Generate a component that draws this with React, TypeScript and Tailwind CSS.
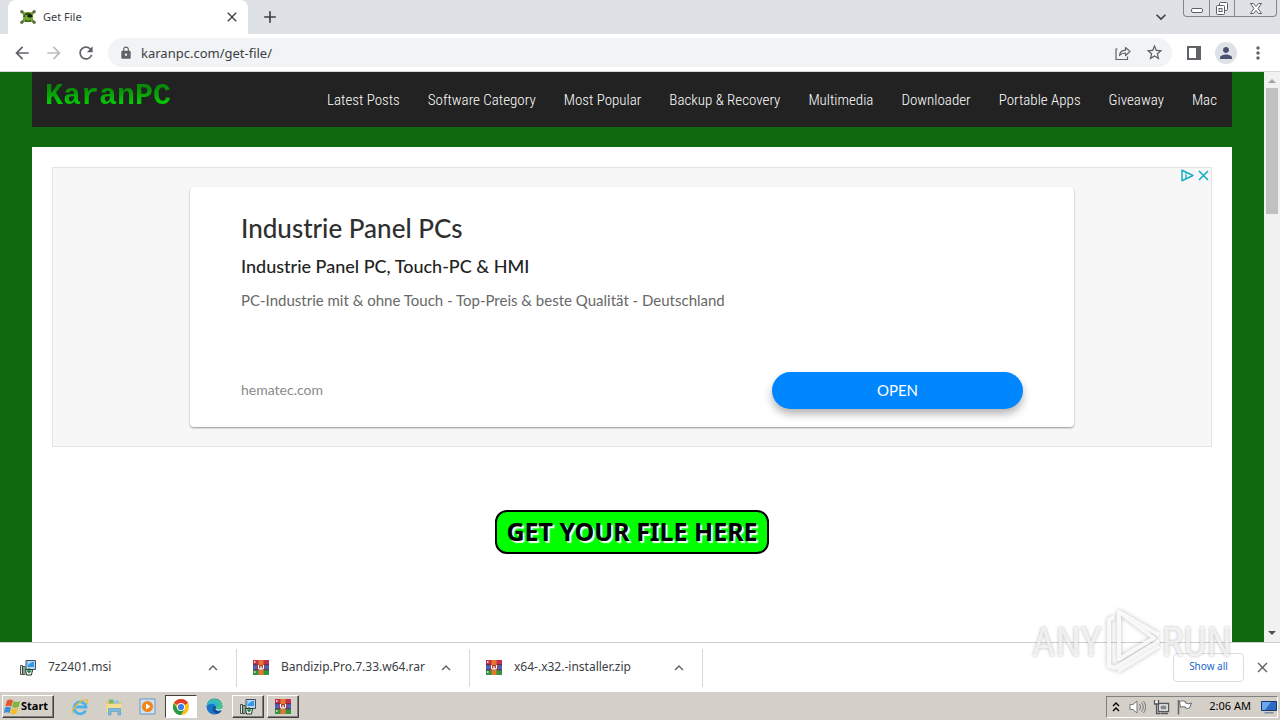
import React from "react";
import {
  MdAdd,
  MdArrowBack,
  MdArrowForward,
  MdClose,
  MdExpandLess,
  MdExpandMore,
  MdLock,
  MdMoreVert,
  MdPerson,
  MdRefresh,
  MdStarBorder,
} from "react-icons/md";

const uiFont = "font-['Noto_Sans',sans-serif]";

const navLinks = [
  "Latest Posts",
  "Software Category",
  "Most Popular",
  "Backup & Recovery",
  "Multimedia",
  "Downloader",
  "Portable Apps",
  "Giveaway",
  "Mac",
];

function Favicon() {
  return (
    <svg viewBox="0 0 16 16" className="size-4" aria-hidden="true">
      <path d="M2 3l12 10M14 3L2 13" stroke="#6f7d4c" strokeWidth="2.6" strokeLinecap="round" />
      <circle cx="1.8" cy="2.5" r="1.6" fill="#5f6d45" />
      <circle cx="14.2" cy="2.5" r="1.6" fill="#5f6d45" />
      <circle cx="1.8" cy="13.3" r="1.6" fill="#5f6d45" />
      <circle cx="14.2" cy="13.3" r="1.6" fill="#5f6d45" />
      <rect x="3" y="3" width="10" height="10" rx="3" fill="#74a832" />
      <path d="M3.500 6.500Q8 1 12.500 6.500V8H3.500z" fill="#2a4a18" />
      <circle cx="6" cy="7" r="1.100" fill="#8cc63f" />
      <path d="M8.500 5.500h3v3h-3z" fill="#0c1408" />
      <path d="M5 10.500q3 2 6 0v2.500H5z" fill="#3f6a1d" />
    </svg>
  );
}

function RarIcon() {
  return (
    <svg viewBox="0 0 16 15" className="h-[15px] w-4" aria-hidden="true">
      <path d="M0 0h16v5H0z" fill="#c0304e" />
      <path d="M0 5h16v5H0z" fill="#4f62b8" />
      <path d="M0 10h16v5H0z" fill="#2f9444" />
      <path d="M0 4.800h16M0 9.800h16" stroke="#4a2740" strokeWidth=".8" />
      <path d="M5.500 0h5v15h-5z" fill="#e8762a" />
      <path d="M1 1h1.500v2H1zM1 11h1.500v2H1z" fill="#f0c8b0" />
      <path d="M4 5h8v5H4z" fill="#9a3434" />
      <path d="M5.500 5v2.500q0 1.700 1.300 1.700T8 7.500V6v1.500q0 1.700 1.200 1.700t1.300-1.700V5" fill="none" stroke="#fff" strokeWidth="1.200" />
    </svg>
  );
}

function MsiIcon() {
  return (
    <svg viewBox="0 0 16 16" className="size-4" aria-hidden="true">
      <path d="M6 .5h9.500v9H6z" fill="#c8d4e4" stroke="#36506e" />
      <path d="M7.500 2h6.500v5H7.500z" fill="#2f9be8" />
      <path d="M8 2h4l-4 3z" fill="#9bdcff" />
      <path d="M8 10h5v2H8z" fill="#8898ac" />
      <path d="M.5 5.500h2v9h-2zM3 6.500h2v8H3z" fill="#dfe6da" stroke="#20302c" strokeWidth=".8" />
      <path d="M5.500 9.500h7l-1 5.500h-5z" fill="#f5f5e8" stroke="#25342e" />
      <path d="M9 8v4M7.300 10.500L9 12.500l1.800-2" fill="none" stroke="#17804a" strokeWidth="1.200" />
    </svg>
  );
}

function ShareIcon() {
  return (
    <svg viewBox="0 0 16 16" className="size-4" fill="none" stroke="#5f6368" aria-hidden="true">
      <path d="M2.500 4H1v10.500h11.500v-3" strokeWidth="1.200" />
      <path d="M4.500 10.500q.5-5 6-5.300V2.500l4.500 4-4.500 4V8q-4 0-6 2.500z" strokeWidth="1.200" strokeLinejoin="round" />
    </svg>
  );
}

function TabStrip() {
  return (
    <div className="flex h-[34px] shrink-0 items-stretch bg-[#dee1e6]">
      <div className="ml-2 flex w-[240px] items-center rounded-t-lg bg-white pl-3 pr-2">
        <Favicon />
        <span className="ml-[7px] flex-1 text-[11px] text-[#3c4043]">Get File</span>
        <button aria-label="Close tab" className="text-[#3c4043]">
          <MdClose className="size-4" />
        </button>
      </div>
      <button aria-label="New tab" className="ml-3 text-[#3c4043]">
        <MdAdd className="size-5" />
      </button>
      <button aria-label="Search tabs" className="ml-auto mr-3 text-[#3c4043]">
        <MdExpandMore className="size-5" />
      </button>
      <div className="mr-[3px] flex h-[17px] overflow-hidden rounded-b-[4px] border border-t-0 border-[#82868d] text-[#5c6066]">
        <button aria-label="Minimize" className="flex w-[25px] items-center justify-center">
          <svg viewBox="0 0 12 12" className="size-3" aria-hidden="true">
            <rect x=".5" y="6.500" width="11" height="4" rx="1.500" fill="#fff" stroke="currentColor" />
          </svg>
        </button>
        <button aria-label="Restore" className="flex w-[26px] items-center justify-center border-x border-[#82868d]">
          <svg viewBox="0 0 14 13" className="h-[13px] w-3.5" aria-hidden="true">
            <rect x="4.500" y=".5" width="8" height="8" rx="1" fill="#fff" stroke="currentColor" />
            <rect x="1.500" y="3.500" width="8" height="9" rx="1" fill="#fff" stroke="currentColor" />
            <rect x="4" y="6.500" width="3" height="3" fill="none" stroke="currentColor" />
          </svg>
        </button>
        <button aria-label="Close window" className="flex w-[41px] items-center justify-center">
          <svg viewBox="0 0 12 11" className="h-[11px] w-3" aria-hidden="true">
            <path d="M.5 .5h3L6 3.500 8.500 .5h3L8 5.500l3.500 5h-3L6 7.500l-2.500 3h-3L4 5.500z" fill="#fff" stroke="currentColor" />
          </svg>
        </button>
      </div>
    </div>
  );
}

function Toolbar() {
  return (
    <div className="flex h-[38px] shrink-0 items-center border-b border-[#d5d7da] bg-white px-3 text-[#5f6368]">
      <button aria-label="Back">
        <MdArrowBack className="size-5" />
      </button>
      <button aria-label="Forward" className="ml-3 text-[#babcbe]">
        <MdArrowForward className="size-5" />
      </button>
      <button aria-label="Reload" className="ml-3">
        <MdRefresh className="size-5" />
      </button>
      <div className="ml-3 flex h-[29px] flex-1 items-center rounded-full bg-[#f1f3f4] pl-[11px] pr-2">
        <MdLock className="size-3.5" />
        <input
          type="text"
          aria-label="Address"
          defaultValue="karanpc.com/get-file/"
          className="h-full min-w-0 flex-1 bg-transparent pl-2 text-[13px] leading-5 text-[#3c4043] outline-none"
        />
        <button aria-label="Share">
          <ShareIcon />
        </button>
        <button aria-label="Bookmark" className="ml-3.5">
          <MdStarBorder className="size-[19px]" />
        </button>
      </div>
      <button aria-label="Side panel" className="ml-[15px]">
        <svg viewBox="0 0 14 14" className="size-3.5" aria-hidden="true">
          <path d="M1 1h12v12H1z" fill="none" stroke="currentColor" strokeWidth="2" />
          <path d="M9 0h5v14H9z" fill="currentColor" />
        </svg>
      </button>
      <button aria-label="Profile" className="ml-3.5 flex size-[22px] items-center justify-center rounded-full bg-[#dee1e6]">
        <MdPerson className="size-[18px] text-[#4a5170]" />
      </button>
      <button aria-label="Menu" className="ml-[11px]">
        <MdMoreVert className="size-5" />
      </button>
    </div>
  );
}

function SiteHeader() {
  return (
    <header className="flex h-[55px] items-start justify-between bg-[#222222] pl-[13px] pr-[15px]">
      <a
        href="#home"
        className="mt-2 bg-gradient-to-b from-[#088c08] from-25% to-[#04d404] to-80% bg-clip-text font-['Liberation_Mono',monospace] text-[30px] font-bold leading-8 text-transparent"
      >
        KaranPC
      </a>
      <nav className="flex gap-7 pt-[18px] font-['Roboto_Condensed',sans-serif] text-[15px] font-light leading-5 text-white">
        {navLinks.map((label) => (
          <a key={label} href="#nav" className="whitespace-nowrap">
            {label}
          </a>
        ))}
      </nav>
    </header>
  );
}

function Advert() {
  return (
    <section
      aria-label="Advertisement"
      className="relative h-[280px] border border-[#e4e4e4] bg-[#f7f7f7] px-[137px] pt-[19px] font-['Lato',sans-serif]"
    >
      <div className="absolute right-px top-px flex gap-[3px] text-[#1cabc4]">
        <button aria-label="Ad choices">
          <svg viewBox="0 0 13 13" className="size-[13px]" fill="none" stroke="currentColor" aria-hidden="true">
            <path d="M1 1.200v10.600L12 6.500z" strokeWidth="1.500" strokeLinejoin="round" />
            <path d="M5 5.500v4M5 3.800v1" strokeWidth="1.400" />
          </svg>
        </button>
        <button aria-label="Close ad">
          <svg viewBox="0 0 13 13" className="size-[13px]" fill="none" stroke="currentColor" aria-hidden="true">
            <path d="M2 2l9 9M11 2l-9 9" strokeWidth="1.600" />
          </svg>
        </button>
      </div>
      <div className="flex h-[240px] flex-col rounded bg-white px-[51px] pb-[18px] pt-[23px] shadow-[0_1px_2px_rgba(0,0,0,0.4)]">
        <h2 className="text-[26px] font-medium leading-9 text-[#2f2f2f]">Industrie Panel PCs</h2>
        <h3 className="mt-1 text-[18px] font-medium leading-8 text-[#222]">Industrie Panel PC, Touch-PC &amp; HMI</h3>
        <p className="mt-1 text-[15px] leading-7 text-[#686868]">
          PC-Industrie mit &amp; ohne Touch - Top-Preis &amp; beste Qualität - Deutschland
        </p>
        <div className="mt-auto flex items-center justify-between">
          <a href="#ad" className="pb-0.5 text-[14px] text-[#8a8a8a]">
            hematec.com
          </a>
          <button className="h-[37px] w-[251px] rounded-full bg-[#0086ff] text-[15px] text-white shadow-[0_5px_9px_rgba(0,0,0,0.3)]">
            OPEN
          </button>
        </div>
      </div>
    </section>
  );
}

function Scrollbar() {
  return (
    <div className="flex w-4 shrink-0 flex-col items-center bg-[#f1f1f1]" aria-hidden="true">
      <svg viewBox="0 0 16 16" className="size-4">
        <path d="M4 11l4-4 4 4z" fill="#a3a3a3" />
      </svg>
      <div className="h-[126px] w-3 bg-[#c1c1c1]" />
      <svg viewBox="0 0 16 16" className="mt-auto size-4">
        <path d="M4 5l4 4 4-4z" fill="#505050" />
      </svg>
    </div>
  );
}

const downloads = [
  { name: "7z2401.msi", Icon: MsiIcon },
  { name: "Bandizip.Pro.7.33.w64.rar", Icon: RarIcon },
  { name: "x64-.x32.-installer.zip", Icon: RarIcon },
];

function DownloadShelf() {
  return (
    <div className="flex h-[51px] shrink-0 items-center border-y border-[#cfcfcf] bg-white pl-1">
      {downloads.map(({ name, Icon }) => (
        <div key={name} className="flex h-[38px] w-[233px] items-center border-r border-[#d5d7da] pl-4 pr-3.5">
          <Icon />
          <span className="ml-3 flex-1 whitespace-nowrap pb-0.5 text-[12px] text-[#3c4043]">{name}</span>
          <button aria-label={`Options for ${name}`} className="text-[#5f6368]">
            <MdExpandLess className="size-[18px]" />
          </button>
        </div>
      ))}
      <button className="ml-auto h-[29px] w-[71px] rounded-[4px] border border-[#dadce0] pb-0.5 text-[10px] text-[#1a66cc]">
        Show all
      </button>
      <button aria-label="Close downloads" className="ml-2.5 mr-[9px] text-[#5f6368]">
        <MdClose className="size-[17px]" />
      </button>
    </div>
  );
}

const taskButton =
  "flex h-[23px] w-8 items-center justify-center border border-b-[#404040] border-l-white border-r-[#404040] border-t-white bg-[#d4d0c8] shadow-[inset_-1px_-1px_0_#808080]";

function Taskbar() {
  return (
    <div className="flex h-[27px] shrink-0 items-center bg-[#d4d0c8] pl-0.5 pr-0.5 text-black">
      <button className="flex h-[23px] w-[52px] items-center border border-b-[#404040] border-l-white border-r-[#404040] border-t-white pl-px text-[11px] font-bold shadow-[inset_-1px_-1px_0_#808080]">
        <svg viewBox="0 0 17 16" className="h-4 w-[17px] shrink-0" aria-hidden="true">
          <path d="M3 1.500q3-2 6 0L7.300 7.500q-3-1.500-6 0z" fill="#e4572b" />
          <path d="M9.700 2.200q3 1.500 6.500 0L14.500 8q-3 1.500-6.500 0z" fill="#7db63c" />
          <path d="M1 8.500q3-1.500 6 0L5.500 14q-3-1.500-5.500 0z" fill="#3c8fd6" />
          <path d="M7.700 9q3 1.500 6.500 0l-1.700 5.500q-3 1.500-6.500 0z" fill="#f3bd2e" />
        </svg>
        Start
      </button>
      <button aria-label="Internet Explorer" className="ml-[17px]">
        <svg viewBox="0 0 18 18" className="size-[18px]" fill="none" aria-hidden="true">
          <path d="M14.500 12.500a6 6 0 1 1 .5-3.500H5" stroke="#4bb3ea" strokeWidth="2.800" />
          <path d="M2 15.500C-1 12 10 1 16 2q1.500 1-.5 4" stroke="#e9b93a" strokeWidth="1.400" />
        </svg>
      </button>
      <button aria-label="Explorer" className="ml-4">
        <svg viewBox="0 0 18 18" className="size-[18px]" aria-hidden="true">
          <path d="M1.500 3h6l1 1.500h8V14h-15z" fill="#e6c566" />
          <path d="M4 1.500h4.500v4H4z" fill="#78b66a" />
          <path d="M9 2.500h5v3H9z" fill="#8fc4e4" />
          <path d="M1.500 6h15v8h-15z" fill="#f4dd92" />
          <path d="M3.500 17v-6.500h12V17H13v-3.500H6V17z" fill="#77bce0" stroke="#4d98c4" strokeWidth=".6" />
        </svg>
      </button>
      <button aria-label="Media Player" className="ml-4">
        <svg viewBox="0 0 17 17" className="size-[17px]" aria-hidden="true">
          <path d="M1 1h15v15H1z" fill="#cfe2f3" stroke="#6699c5" />
          <circle cx="8.500" cy="8.500" r="5.500" fill="#f08519" />
          <path d="M7 5.500v6l4.500-3z" fill="#fff" />
        </svg>
      </button>
      <button
        aria-label="Chrome"
        className="ml-[9px] flex h-[23px] w-8 items-center justify-center border border-b-white border-l-[#404040] border-r-white border-t-[#404040] bg-white"
      >
        <svg viewBox="0 0 16 16" className="size-4" aria-hidden="true">
          <circle cx="8" cy="8" r="8" fill="#fbc116" />
          <path d="M8 8L1.070 4A8 8 0 0 1 14.930 4z" fill="#e33b2e" />
          <path d="M1.070 4A8 8 0 0 0 8 16l3.500-6L8 8 4.500 10z" fill="#269a45" />
          <circle cx="8" cy="8" r="4" fill="#fff" />
          <circle cx="8" cy="8" r="3.100" fill="#3d7de8" />
        </svg>
      </button>
      <button aria-label="Edge" className="ml-[9px]">
        <svg viewBox="0 0 17 17" className="size-[17px]" aria-hidden="true">
          <circle cx="8.500" cy="8.500" r="8" fill="#1775c6" />
          <path d="M.6 8A8 8 0 0 1 16.500 8q0 3.500-4 3.500-3.500 0-2.500-2.500Q9.500 5.500 6 5.500 2.500 5.500.6 8z" fill="#42c68a" />
          <path d="M.6 8Q2 2.500 8 3q5 .5 5 4L10 9Q9.500 5.500 6 5.500 2.500 5.500.6 8z" fill="#2fb4d8" />
          <path d="M10 9q-1 5 5.500 4-1.500 2-4 2.800Q5.500 14 7 9.500q1-2 3-.5z" fill="#124d93" />
          <path d="M10 9q-1 2.500 2.500 2.500t4-2.500l-.5 3q-5.500 2-6.500-1z" fill="#d4e9ee" />
        </svg>
      </button>
      <button aria-label="Installer" className={`${taskButton} ml-[9px]`}>
        <MsiIcon />
      </button>
      <button aria-label="WinRAR" className={`${taskButton} ml-[3px]`}>
        <RarIcon />
      </button>
      <div className="ml-auto flex h-[22px] items-center border border-b-white border-l-[#808080] border-r-white border-t-[#808080] pl-1">
        <svg viewBox="0 0 10 12" className="h-3 w-2.5" fill="none" stroke="#000" strokeWidth="1.400" aria-hidden="true">
          <path d="M2 5l3-3 3 3M2 10l3-3 3 3" />
        </svg>
        <svg viewBox="0 0 17 16" className="ml-2 h-4 w-[17px]" fill="none" stroke="#77777a" aria-hidden="true">
          <path d="M1 5.500h3L8 2v12L4 10.500H1z" fill="#fff" />
          <path d="M10.500 5q2 3 0 6M12.500 3.500q3.500 4.500 0 9M14.500 2q4.500 6 0 12" />
        </svg>
        <svg viewBox="0 0 17 16" className="ml-[7px] h-4 w-[17px]" fill="none" stroke="#55585c" aria-hidden="true">
          <path d="M5.500 4.500h10v8h-10z" fill="#fff" strokeWidth="1.400" />
          <path d="M7.500 6.500h6v4h-6z" fill="#85898e" stroke="none" />
          <path d="M1.500 1v4h4V1M3.500 5v9.500h4M8 14.500h7" strokeWidth="1.300" />
          <path d="M2.500 2h2v2h-2z" fill="#fff" stroke="none" />
        </svg>
        <svg viewBox="0 0 16 16" className="ml-[7px] size-4" fill="#fff" stroke="#66696d" aria-hidden="true">
          <path d="M2.500 2.500q3-1.500 6 0v1.500q3 1.500 6 0l-2 5q-2 1-4 0v-1q-3-1-5 .5z" />
          <path d="M1.500 1v14.500" strokeWidth="1.600" />
        </svg>
        <span className="ml-4 text-[11px]">2:06 AM</span>
        <svg viewBox="0 0 16 14" className="ml-2.5 h-3.5 w-4" aria-hidden="true">
          <path d="M.5 1.500h15v9H.5z" fill="#2c6bc4" stroke="#16386e" />
          <path d="M1 2h9L4 10H1z" fill="#69a8ee" />
          <path d="M4 12h8l1 1.500H3z" fill="#7c8ea6" />
        </svg>
      </div>
    </div>
  );
}

function Watermark() {
  return (
    <div className="pointer-events-none absolute bottom-[44px] right-12 flex items-center font-['Roboto_Condensed',sans-serif] text-[41px] leading-none text-white/75 [text-shadow:0_0_3px_rgba(0,0,0,0.3)]">
      <span>ANY</span>
      <svg
        viewBox="0 0 56 68"
        className="ml-1 h-[68px] w-14 drop-shadow-[0_0_2px_rgba(0,0,0,0.3)]"
        fill="none"
        stroke="#fff"
        strokeOpacity=".85"
        strokeWidth="4"
        strokeLinejoin="round"
        aria-hidden="true"
      >
        <path d="M13 4l40 23M13 4v47L48 30z" />
        <path d="M8 9L3 12v46l6 2 44-27M12 63l41-25" />
      </svg>
      <span>RUN</span>
    </div>
  );
}

export default function App() {
  return (
    <div className={`relative flex h-screen flex-col overflow-hidden bg-white ${uiFont}`}>
      <TabStrip />
      <Toolbar />
      <div className="flex min-h-0 flex-1">
        <main className="flex min-w-0 flex-1 flex-col overflow-hidden bg-[#10690e] px-8">
          <SiteHeader />
          <div className="mt-5 flex-1 bg-white p-5">
            <Advert />
            <div className="mt-[63px] flex justify-center">
              <button className="h-11 whitespace-nowrap rounded-[12px] border-2 border-black bg-[#00ff00] px-[9px] pb-0.5 font-['Noto_Sans',sans-serif] text-[25px] font-bold leading-none text-black [text-shadow:2px_2px_1px_#fff]">
                GET YOUR FILE HERE
              </button>
            </div>
          </div>
        </main>
        <Scrollbar />
      </div>
      <DownloadShelf />
      <Taskbar />
      <Watermark />
    </div>
  );
}
